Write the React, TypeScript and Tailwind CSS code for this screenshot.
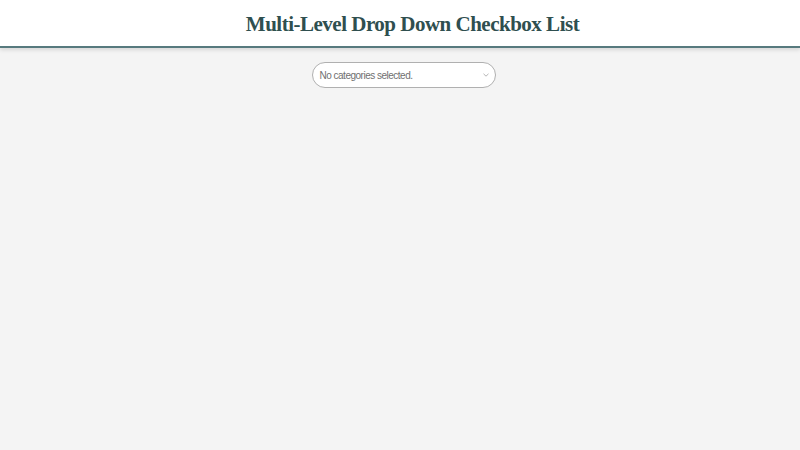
import React from 'react';

const Chevron: React.FC = () => (
  <svg width="6" height="4" viewBox="0 0 6 4" className="shrink-0">
    <path d="M0.5 0.8 L3 3.2 L5.5 0.8" fill="none" stroke="#b5b5b5" strokeWidth="1" />
  </svg>
);

const App: React.FC = () => {
  return (
    <div className="min-h-screen w-full bg-[#f4f4f4]">
      <header className="h-[48px] bg-white border-b-2 border-[#577a7e] shadow-[0_2px_4px_rgba(0,0,0,0.12)] flex items-center justify-center pl-[25px]">
        <h1 className="text-[21px] tracking-[-0.5px] font-bold text-[#2f4f4f] font-['Liberation_Serif',serif] leading-none whitespace-nowrap pt-[2px]">
          Multi-Level Drop Down Checkbox List
        </h1>
      </header>

      <div className="flex justify-center pt-[14px] pl-[7px]">
        <button className="w-[184px] h-[26px] bg-white border border-[#b0b0b0] rounded-full flex items-center justify-between pl-[7px] pr-[6px]">
          <span className="text-[10px] tracking-[-0.5px] text-[#707070] font-['Liberation_Sans',Arial,sans-serif] whitespace-nowrap">
            No categories selected.
          </span>
          <Chevron />
        </button>
      </div>
    </div>
  );
};

export default App;
